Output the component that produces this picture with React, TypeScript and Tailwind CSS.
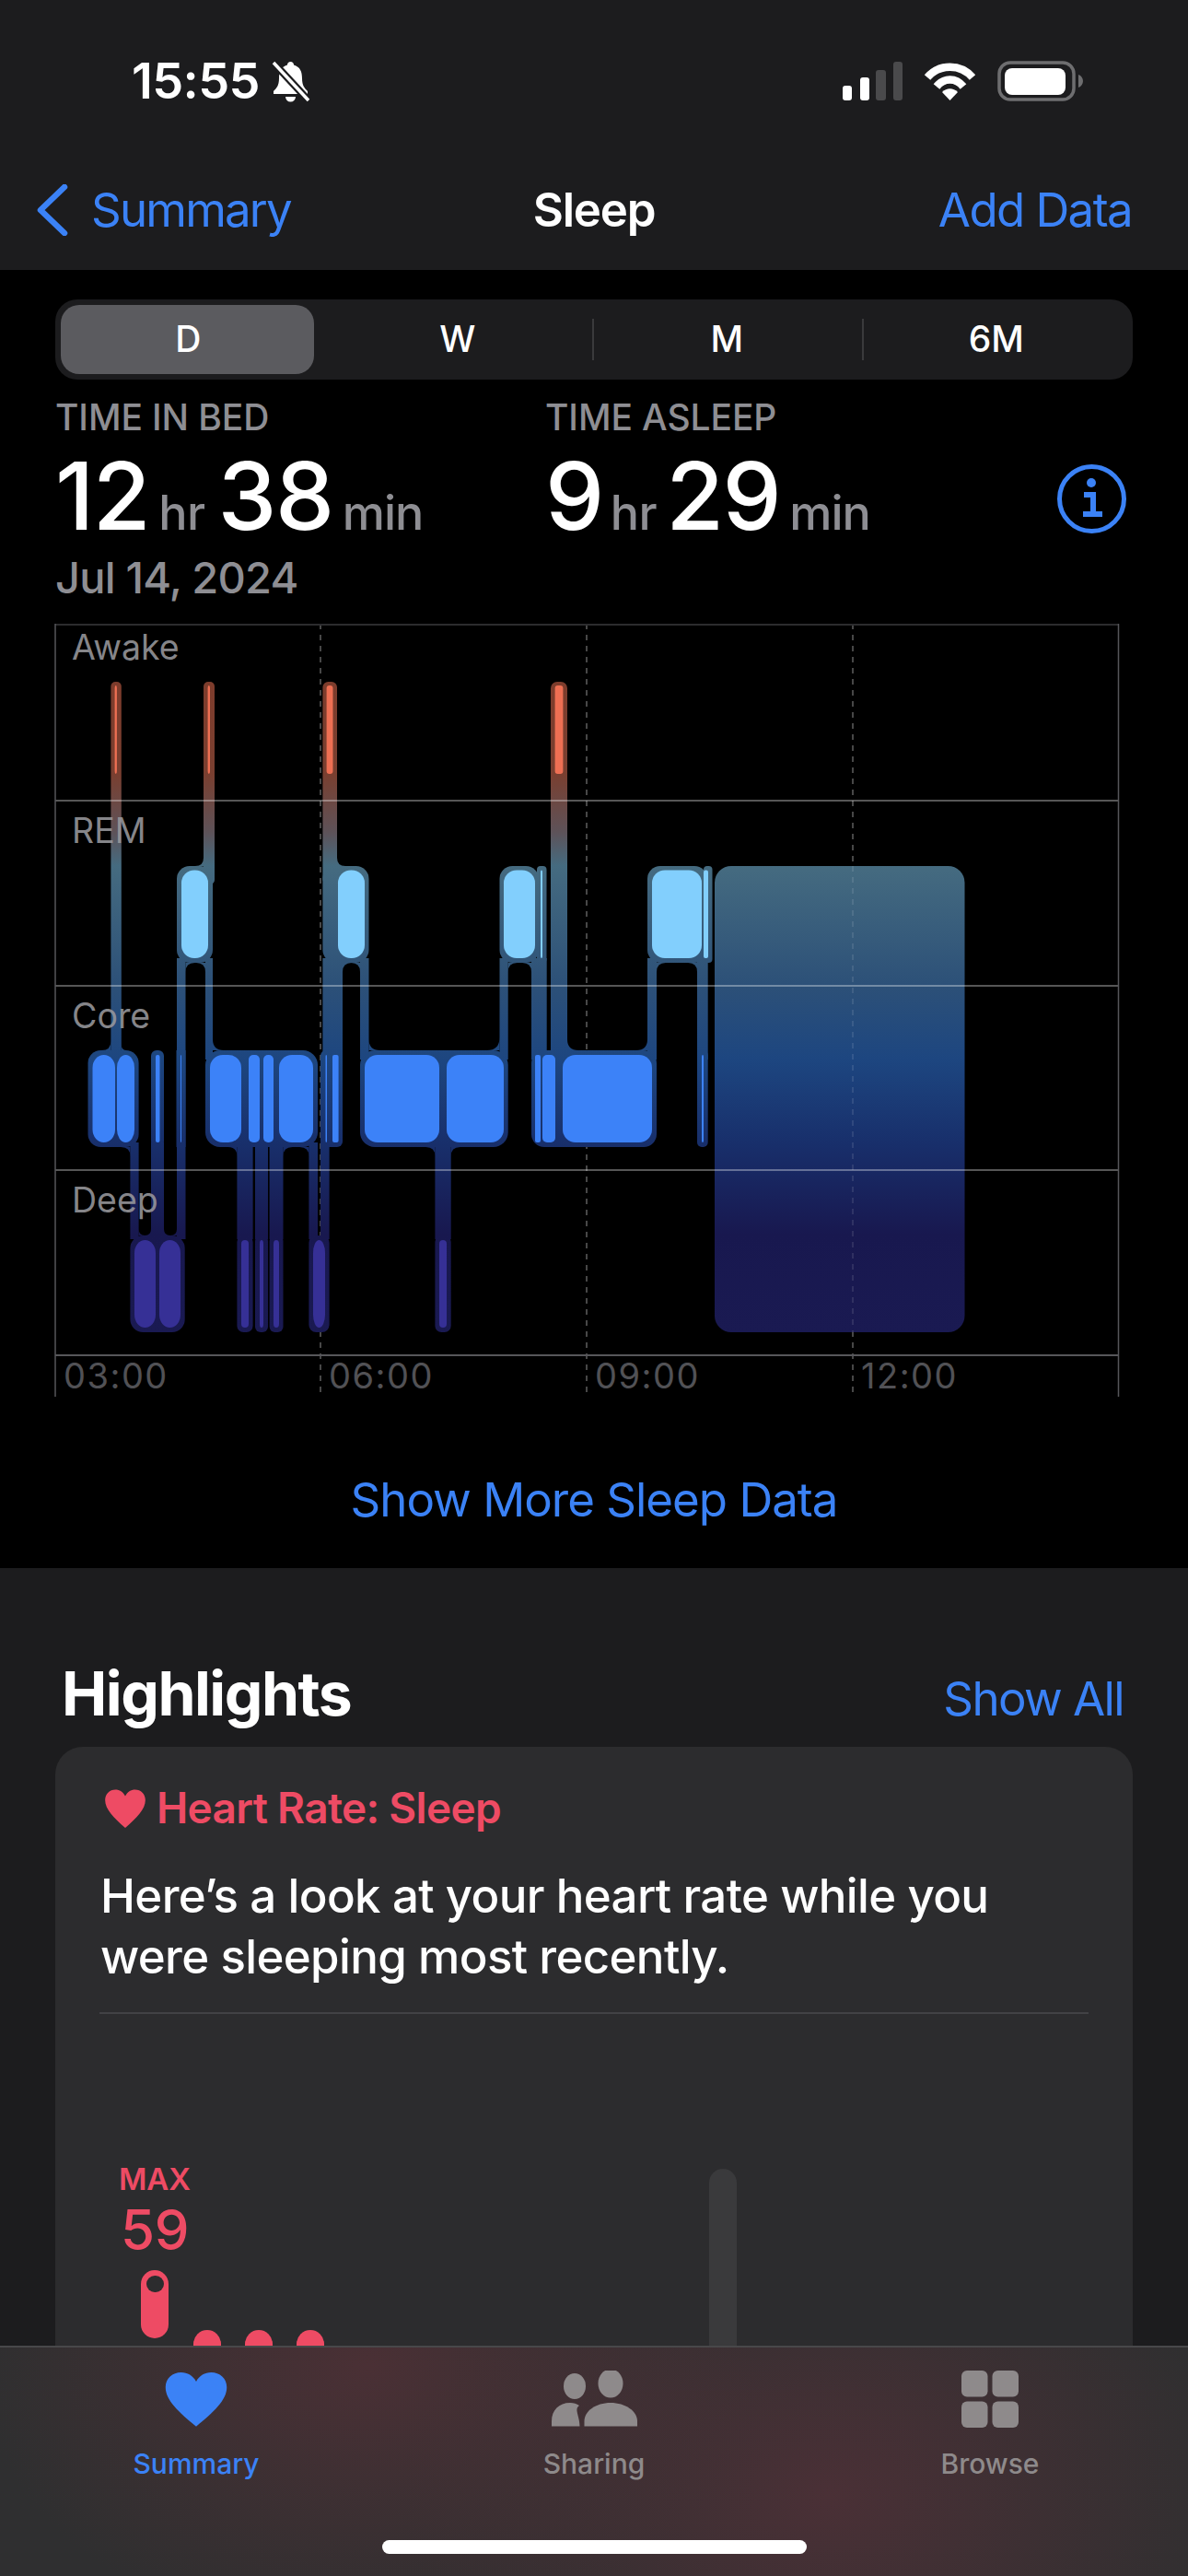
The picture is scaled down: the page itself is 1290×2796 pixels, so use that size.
const BLUE = '#3b82f6'

function corner(x: number, y: number, sx: number, sy: number, r = 10) {
  return `M${x} ${y}L${x + sx * r} ${y}Q${x} ${y} ${x} ${y + sy * r}Z`
}

// [x1, x2, y1, y2, rx]
const halos = [
  // awake stems
  [120.4, 131.8, 740, 1150, 5],
  [221, 233, 740, 960, 5],
  [350.4, 366, 740, 960, 6],
  [598, 616, 740, 1150, 7],
  // rem
  [192, 231, 940, 1045, 14],
  [350.4, 400.5, 940, 1045, 14],
  [542.5, 585, 940, 1045, 14],
  [583, 593.5, 940, 1045, 4],
  [703, 768, 940, 1045, 14],
  [764, 773.5, 940, 1045, 4],
  // core
  [95.5, 150.6, 1140, 1245, 14],
  [164, 178, 1140, 1245, 6],
  [191.5, 201.5, 1140, 1245, 0],
  [223, 345, 1140, 1245, 16],
  [348, 372, 1140, 1245, 6],
  [391, 551.7, 1140, 1245, 16],
  [577, 713, 1140, 1245, 14],
  [757, 768.7, 1140, 1245, 5],
  // deep
  [141.4, 200.7, 1341, 1446, 14],
  [257.4, 274.6, 1341, 1446, 7],
  [277, 291, 1341, 1446, 6],
  [292.6, 307.5, 1341, 1446, 6],
  [335.4, 357.6, 1341, 1446, 8],
  [472.4, 489.7, 1341, 1446, 7],
  // rem to core legs
  [192, 201.5, 1040, 1345, 0],
  [223, 231, 1040, 1150, 0],
  [350.4, 372, 1040, 1150, 0],
  [391, 400.5, 1040, 1150, 0],
  [542.5, 551.7, 1040, 1150, 0],
  [577, 593.7, 1040, 1150, 0],
  [703, 713, 1040, 1150, 0],
  [757, 768.7, 1040, 1150, 0],
  // core to deep legs
  [141.4, 150.6, 1240, 1345, 0],
  [164, 178, 1240, 1345, 0],
  [257.4, 274.6, 1240, 1345, 0],
  [277, 291, 1240, 1345, 0],
  [292.6, 307.5, 1240, 1345, 0],
  [335.4, 345, 1240, 1345, 0],
  [348, 357.6, 1240, 1345, 0],
  [472.4, 489.7, 1240, 1345, 0],
]

const fillets = [
  corner(120.4, 1140, -1, -1),
  corner(131.8, 1140, 1, -1, 6),
  corner(231, 1140, 1, -1, 12),
  corner(400.5, 1140, 1, -1, 12),
  corner(542.5, 1140, -1, -1, 14),
  corner(616, 1140, 1, -1, 12),
  corner(703, 1140, -1, -1, 12),
  corner(221, 940, -1, -1, 9),
  corner(366, 940, 1, -1, 9),
  corner(201.5, 1045, 1, 1),
  corner(223, 1045, -1, 1),
  corner(372, 1045, 1, 1),
  corner(391, 1045, -1, 1),
  corner(551.7, 1045, 1, 1),
  corner(577, 1045, -1, 1),
  corner(713, 1045, 1, 1),
  corner(757, 1045, -1, 1),
  corner(141.4, 1245, -1, 1),
  corner(257.4, 1245, -1, 1),
  corner(307.5, 1245, 1, 1),
  corner(335.4, 1245, -1, 1),
  corner(472.4, 1245, -1, 1),
  corner(489.7, 1245, 1, 1),
  corner(150.6, 1341, 1, -1, 7),
  corner(164, 1341, -1, -1, 7),
  corner(178, 1341, 1, -1, 7),
  corner(192, 1341, -1, -1, 7),
]

const segments = [
  { color: '#ee6f53', y1: 744, y2: 840, rx: 3, bars: [[124.6, 126.9], [225.6, 228], [354.6, 361.5], [602.6, 611.4]] },
  { color: '#82cffd', y1: 944.5, y2: 1040, rx: 14, bars: [[197, 226], [367, 396], [547, 581], [708, 762]] },
  { color: '#82cffd', y1: 944.5, y2: 1040, rx: 2, bars: [[587, 589], [764, 769]] },
  { color: '#3c82f8', y1: 1145, y2: 1240, rx: 14, bars: [[100.5, 125], [127, 146], [228, 262], [303, 340], [396, 477], [485, 547], [611, 708]] },
  { color: '#3c82f8', y1: 1145, y2: 1240, rx: 5, bars: [[270, 282], [286, 297], [589, 603]] },
  { color: '#3c82f8', y1: 1145, y2: 1240, rx: 2, bars: [[169, 173.5], [196, 197], [353.5, 355], [361, 367.6], [581, 587], [762, 764]] },
  { color: '#363096', y1: 1346, y2: 1441, rx: 14, bars: [[146, 169], [173, 196], [340, 353]] },
  { color: '#363096', y1: 1346, y2: 1441, rx: 4, bars: [[262, 270], [282, 286], [297, 303], [477, 485]] },
]

function SleepChart() {
  return (
    <svg viewBox="0 677 1290 845" className="block w-[1290px] h-[845px]">
      <defs>
        <linearGradient id="stage" gradientUnits="userSpaceOnUse" x1="0" y1="740" x2="0" y2="1446">
          <stop offset="0" stopColor="#7d3c2c" />
          <stop offset="0.142" stopColor="#793f30" />
          <stop offset="0.23" stopColor="#5e5258" />
          <stop offset="0.283" stopColor="#456b80" />
          <stop offset="0.47" stopColor="#2c5078" />
          <stop offset="0.58" stopColor="#1d4680" />
          <stop offset="0.71" stopColor="#182f6b" />
          <stop offset="0.85" stopColor="#18184f" />
          <stop offset="1" stopColor="#1a1a52" />
        </linearGradient>
      </defs>

      {/* dashed hours sit behind the bars */}
      <path d="M348 677V1512M637 677V1512M926 677V1512" stroke="#ffffff" strokeOpacity="0.28" strokeWidth="2" strokeDasharray="6 6" />

      <g fill="url(#stage)">
        {halos.map(([x1, x2, y1, y2, rx], i) => (
          <rect key={i} x={x1} y={y1} width={x2 - x1} height={y2 - y1} rx={rx} />
        ))}
        {fillets.map((d, i) => (
          <path key={i} d={d} />
        ))}
        <rect x="776" y="940" width="271.5" height="506" rx="18" />
      </g>
      <path d="M926 940V1446" stroke="#ffffff" strokeOpacity="0.1" strokeWidth="2" strokeDasharray="6 6" />

      {segments.map((seg, i) =>
        seg.bars.map(([x1, x2]) => (
          <rect key={`${i}-${x1}`} x={x1} y={seg.y1} width={x2 - x1} height={seg.y2 - seg.y1} rx={seg.rx} fill={seg.color} />
        )),
      )}

      {/* grid */}
      <path d="M60 678H1214" stroke="#2c2c2e" strokeWidth="2" />
      <path d="M60 869H1214M60 1070H1214M60 1270H1214" stroke="#ffffff" strokeOpacity="0.45" strokeWidth="1.5" />
      <path d="M60 1471H1214" stroke="#56565a" strokeWidth="2" />
      <path d="M60 677V1516M1214.5 677V1516" stroke="#56565a" strokeWidth="1.5" />

      <g fontSize="37.5" fill="#98989d" fontFamily="Inter, sans-serif" fillOpacity="0.9">
        <text x="78" y="716">Awake</text>
        <text x="78" y="915">REM</text>
        <text x="78" y="1116">Core</text>
        <text x="78" y="1316">Deep</text>
      </g>
      <g fontSize="38" fill="#515155" fontFamily="Inter, sans-serif" letterSpacing="1.5">
        <text x="69" y="1507">03:00</text>
        <text x="357" y="1507">06:00</text>
        <text x="646" y="1507">09:00</text>
        <text x="935" y="1507">12:00</text>
      </g>
    </svg>
  )
}

function StatusIcons() {
  return (
    <div className="flex items-center">
      <svg viewBox="0 0 65 42" className="w-[65px] h-[42px]">
        <rect x="0" y="26" width="10" height="16" rx="3" fill="#fff" />
        <rect x="19" y="17" width="10" height="25" rx="3" fill="#fff" />
        <rect x="36" y="9" width="11" height="33" rx="3" fill="#4a4a4c" />
        <rect x="55" y="0" width="10" height="42" rx="3" fill="#4a4a4c" />
      </svg>
      <svg viewBox="0 0 57 42" className="w-[57px] h-[42px] ml-[23px]" fill="none">
        <path d="M4 17C17 2 40 2 53 17" stroke="#fff" strokeWidth="8.5" />
        <path d="M14 27C22 17 35 17 43 27" stroke="#fff" strokeWidth="8.5" />
        <path d="M28.5 42L20 33C25 28 32 28 37 33Z" fill="#fff" />
      </svg>
      <svg viewBox="0 0 94 44" className="w-[94px] h-[44px] ml-[23px]">
        <rect x="2" y="2" width="81" height="40" rx="12" fill="none" stroke="#6e6e70" strokeWidth="3.5" />
        <rect x="8" y="8" width="66" height="29" rx="8" fill="#fff" />
        <path d="M88 15c3 1 5 4 5 7s-2 6-5 7Z" fill="#6e6e70" />
      </svg>
    </div>
  )
}

function BellSlash() {
  return (
    <svg viewBox="0 0 43 45" className="w-[43px] h-[45px]">
      <path d="M21.5 1c-2 0-3.5 1.5-3.5 3.5C11 6.5 9 12 9 19c0 8-3 11-6 14v3h37v-3c-3-3-6-6-6-14 0-7-2-12.5-9-14.5C25 2.5 23.5 1 21.5 1Z" fill="#fff" />
      <path d="M16 39a5.5 5.5 0 0 0 11 0Z" fill="#fff" />
      <path d="M3 2L41 43" stroke="#1c1c1e" strokeWidth="8" />
      <path d="M3 2L41 43" stroke="#fff" strokeWidth="3.5" />
    </svg>
  )
}

const HEART = 'M12 23.5C5.5 17.5 .6 12.5 .6 7 .6 3.4 3.2 .8 6.4 .8 8.8 .8 10.8 2.2 12 4.6 13.2 2.2 15.2 .8 17.6 .8 20.8 .8 23.4 3.4 23.4 7 23.4 12.5 18.5 17.5 12 23.5Z'

function Stat({ label, a, b, width, hrGap }: { label: string; a: string; b: string; width: string; hrGap: string }) {
  return (
    <div className={width}>
      <div className="text-[39px] leading-[40px] font-medium tracking-[-0.1px] text-[#8e8e93]">{label}</div>
      <div className="mt-[14px] flex items-baseline text-[102px] leading-[102px] font-medium tracking-[-1.5px] text-white">
        {a}
        <span className={`${hrGap} text-[52px] leading-none font-medium tracking-[-0.5px] text-[#8e8e93]`}>hr</span>
        {b}
        <span className="ml-[10px] text-[52px] leading-none font-medium tracking-[-1px] text-[#8e8e93]">min</span>
      </div>
    </div>
  )
}

export default function App() {
  const ranges = ['D', 'W', 'M', '6M']

  return (
    <div className="relative w-[1290px] h-[2796px] overflow-hidden bg-[#1c1c1e] font-[Inter,sans-serif]">
      {/* Header */}
      <header className="h-[293px] bg-[#1c1c1e]">
        <div className="flex items-center justify-between h-[176px] pl-[143px] pr-[113px]">
          <div className="flex items-center gap-[12px]">
            <span className="text-[54px] leading-[60px] font-semibold tracking-[-0.6px] text-white">15:55</span>
            <BellSlash />
          </div>
          <StatusIcons />
        </div>
        <div className="relative flex items-center justify-between h-[104px] pl-[40px] pr-[61px]">
          <div className="flex items-center gap-[25px]">
            <svg viewBox="0 0 34 56" className="w-[34px] h-[56px]" fill="none">
              <path d="M30 3L4 28L30 53" stroke={BLUE} strokeWidth="6.5" strokeLinecap="round" strokeLinejoin="round" />
            </svg>
            <span className="text-[51px] tracking-[-1.8px] text-[#3b82f6]">Summary</span>
          </div>
          <span className="absolute left-0 right-0 text-center text-[51px] font-semibold tracking-[-1.2px] text-white">Sleep</span>
          <span className="text-[51px] tracking-[-1.6px] text-[#3b82f6]">Add Data</span>
        </div>
      </header>

      {/* Main */}
      <main className="bg-black pt-[32px] pb-[44px]">
        <div className="mx-[60px] h-[87px] py-[6px] rounded-[24px] bg-[#1c1c1e] grid grid-cols-4">
          {ranges.map((r, i) => (
            <div key={r} className="relative flex items-center justify-center">
              {i === 0 && <div className="absolute inset-y-0 left-[6px] w-[275px] rounded-[20px] bg-[#5b5b5f]" />}
              {i > 1 && <div className="absolute left-[-2px] w-[2px] h-[45px] bg-[#3a3a3c]" />}
              <span className="relative -translate-x-[2px] text-[39px] font-medium text-white">{r}</span>
            </div>
          ))}
        </div>

        <div className="flex pl-[60px] pr-[67px] mt-[21px]">
          <div>
            <Stat label="TIME IN BED" a="12" b="38" width="w-[532px]" hrGap="ml-[10px] mr-[14px]" />
            <div className="text-[47px] leading-[50px] mt-[13px] font-medium tracking-[-0.8px] text-[#8e8e93]">Jul 14, 2024</div>
          </div>
          <Stat label="TIME ASLEEP" a="9" b="29" width="w-[500px]" hrGap="ml-[8px] mr-[10px]" />
          <svg viewBox="0 0 75 75" className="ml-auto mt-[71px] w-[75px] h-[75px]" fill="none">
            <circle cx="37.5" cy="37.5" r="35" stroke={BLUE} strokeWidth="5" />
            <circle cx="37" cy="20" r="5" fill={BLUE} />
            <path d="M29 33H39V54M28 54H49" stroke={BLUE} strokeWidth="6" />
          </svg>
        </div>

        <div className="mt-[25px]">
          <SleepChart />
        </div>

        <div className="mt-[76px] text-center text-[51px] leading-[60px] tracking-[-1px] text-[#3b82f6]">Show More Sleep Data</div>
      </main>

      {/* Highlights */}
      <section className="pt-[96px]">
        <div className="flex items-baseline justify-between pl-[67px] pr-[70px]">
          <h2 className="text-[66px] leading-[80px] font-bold tracking-[-1.5px] text-white">Highlights</h2>
          <span className="text-[51px] tracking-[-1.6px] text-[#3b82f6]">Show All</span>
        </div>

        <div className="mx-[60px] mt-[13px] rounded-t-[30px] bg-[#2c2c2e] px-[48px] pt-[42px]">
          <div className="flex items-center gap-[11px] h-[50px] ml-[5px]">
            <svg viewBox="0 0 24 24" preserveAspectRatio="none" className="w-[46px] h-[44px]">
              <path d={HEART} fill="#ee4b64" />
            </svg>
            <span className="text-[46px] font-semibold tracking-[-0.7px] text-[#ee4b64]">Heart Rate: Sleep</span>
          </div>
          <p className="mt-[37px] ml-[1px] text-[51px] leading-[66px] font-medium tracking-[-0.65px] text-white">
            Here’s a look at your heart rate while you
            <br />
            were sleeping most recently.
          </p>
          <div className="mt-[27px] h-[2px] bg-[#424245]" />

          {/* mini heart rate chart */}
          <div className="flex items-start h-[400px]">
            <div className="ml-[20px] mt-[161px] w-[80px] flex flex-col items-center">
              <div className="text-[33px] leading-[36px] font-semibold text-[#ee4b64]">MAX</div>
              <div className="mt-[7px] text-[60px] leading-[60px] font-medium tracking-[-0.5px] text-[#ee4b64]">59</div>
              <div className="mt-[14px] w-[30px] h-[74px] rounded-full bg-[#ee4b64] pt-[6px] flex justify-center">
                <div className="w-[19px] h-[18px] rounded-full bg-[#2c2c2e]" />
              </div>
            </div>
            <div className="ml-[2px] mt-[343px] flex gap-[26px]">
              <div className="w-[30px] h-[60px] rounded-full bg-[#ee4b64]" />
              <div className="w-[30px] h-[60px] rounded-full bg-[#ee4b64]" />
              <div className="w-[30px] h-[60px] rounded-full bg-[#ee4b64]" />
            </div>
            <div className="ml-[418px] mt-[168px] w-[30px] h-[300px] rounded-full bg-[#3a3a3c]" />
          </div>
        </div>
      </section>

      {/* Tab bar */}
      <nav className="absolute inset-x-0 bottom-0 h-[250px] flex flex-col border-t-2 border-[#48484a] bg-[radial-gradient(ellipse_420px_300px_at_400px_20px,#4a3035,transparent),radial-gradient(ellipse_460px_320px_at_900px_160px,#4a3036,transparent)] bg-[#2f2f30]">
        <div className="grid grid-cols-3 pt-[25px]">
          <div className="flex flex-col items-center -translate-x-[2px]">
            <svg viewBox="0 0 24 24" preserveAspectRatio="none" className="w-[70px] h-[62px]">
              <path d={HEART} fill={BLUE} />
            </svg>
            <span className="mt-[21px] text-[30px] leading-[36px] font-medium text-[#3b82f6]">Summary</span>
          </div>
          <div className="flex flex-col items-center">
            <svg viewBox="598 2573 93 62" className="w-[93px] h-[62px]" fill="#8e8a8b">
              <ellipse cx="623" cy="2590" rx="12" ry="14" />
              <ellipse cx="662" cy="2587" rx="13.5" ry="15.5" />
              <path d="M633.5 2633.5V2628C633.5 2617 646 2608 662 2608S691 2617 691 2628V2633.5Z" />
              <path d="M598 2633.5V2628C598 2616 606 2608 618 2608C622 2608 625 2609 628 2611C622 2615 628.5 2622 628.5 2633.5Z" />
            </svg>
            <span className="mt-[21px] text-[30px] leading-[36px] font-medium text-[#8e8a8b]">Sharing</span>
          </div>
          <div className="flex flex-col items-center">
            <svg viewBox="0 0 62 62" className="w-[62px] h-[62px]" fill="#8e8a8b">
              <rect x="0" y="0" width="28.5" height="28.5" rx="6" />
              <rect x="33.5" y="0" width="28.5" height="28.5" rx="6" />
              <rect x="0" y="33.5" width="28.5" height="28.5" rx="6" />
              <rect x="33.5" y="33.5" width="28.5" height="28.5" rx="6" />
            </svg>
            <span className="mt-[21px] text-[30px] leading-[36px] font-medium text-[#8e8a8b]">Browse</span>
          </div>
        </div>
        <div className="mt-auto mb-[24px] mx-auto w-[461px] h-[15px] rounded-full bg-white" />
      </nav>
    </div>
  )
}
